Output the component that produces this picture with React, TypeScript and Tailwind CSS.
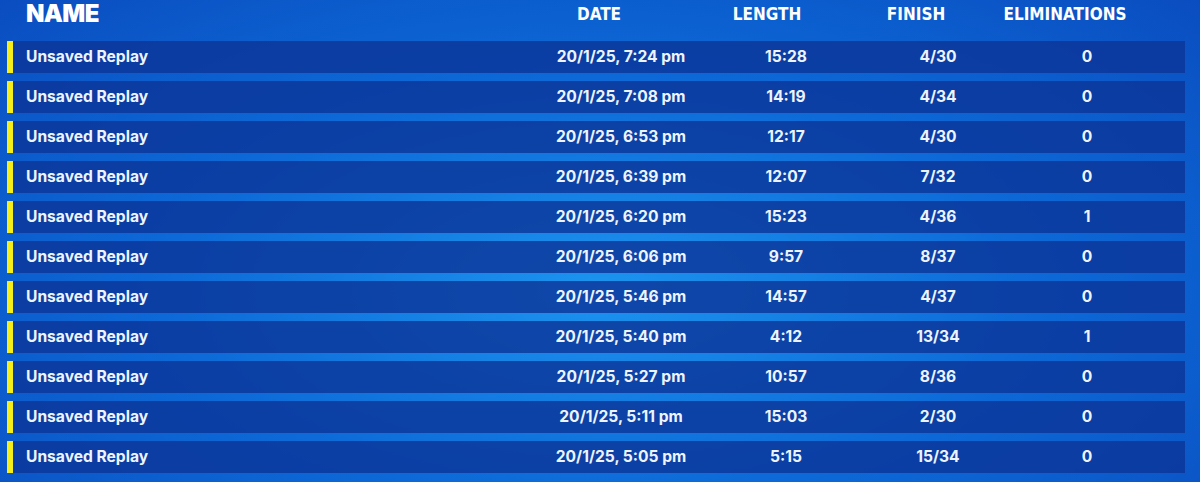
import React from 'react';

interface Replay {
  date: string;
  length: string;
  finish: string;
  elims: number;
}

const replays: Replay[] = [
  { date: '20/1/25, 7:24 pm', length: '15:28', finish: '4/30', elims: 0 },
  { date: '20/1/25, 7:08 pm', length: '14:19', finish: '4/34', elims: 0 },
  { date: '20/1/25, 6:53 pm', length: '12:17', finish: '4/30', elims: 0 },
  { date: '20/1/25, 6:39 pm', length: '12:07', finish: '7/32', elims: 0 },
  { date: '20/1/25, 6:20 pm', length: '15:23', finish: '4/36', elims: 1 },
  { date: '20/1/25, 6:06 pm', length: '9:57', finish: '8/37', elims: 0 },
  { date: '20/1/25, 5:46 pm', length: '14:57', finish: '4/37', elims: 0 },
  { date: '20/1/25, 5:40 pm', length: '4:12', finish: '13/34', elims: 1 },
  { date: '20/1/25, 5:27 pm', length: '10:57', finish: '8/36', elims: 0 },
  { date: '20/1/25, 5:11 pm', length: '15:03', finish: '2/30', elims: 0 },
  { date: '20/1/25, 5:05 pm', length: '5:15', finish: '15/34', elims: 0 },
];

function ReplayRow({ replay }: { replay: Replay }) {
  return (
    <div className="flex h-8">
      {/* selection marker */}
      <div className="w-[6px] bg-[#f3ee1c]" />
      <div className="flex flex-1 items-center bg-[#0b3597]/80 text-[15.6px] font-bold text-[#eef4ff]">
        <div className="w-[528px] pl-[13px]">Unsaved Replay</div>
        <div className="w-[160px] text-center">{replay.date}</div>
        <div className="w-[170px] text-center">{replay.length}</div>
        <div className="w-[134px] text-center">{replay.finish}</div>
        <div className="w-[164px] text-center">{replay.elims}</div>
      </div>
    </div>
  );
}

export default function App() {
  return (
    <div
      className="relative h-[482px] w-[1200px] overflow-hidden bg-[radial-gradient(ellipse_at_50%_60%,#1c94f0_0%,#0d6ad8_50%,#0a4dc0_100%)]"
      style={{ fontFamily: 'Inter, "Noto Sans", sans-serif' }}
    >
      {/* Column headers */}
      <div className="flex h-7 items-center pl-[26px] text-white">
        <div className="w-[493px] text-[24px] leading-none font-black tracking-tight">NAME</div>
        <div
          className="flex items-center text-[17px] leading-none font-bold"
          style={{ fontFamily: '"DejaVu Sans Condensed", "DejaVu Sans", sans-serif' }}
        >
          <div className="w-[160px] text-center">DATE</div>
          <div className="w-[176px] text-center">LENGTH</div>
          <div className="w-[122px] text-center">FINISH</div>
          <div className="w-[176px] text-center">ELIMINATIONS</div>
        </div>
      </div>

      {/* Replay list */}
      <div className="flex flex-col gap-2 pt-[13px] pr-[15px] pl-[7px]">
        {replays.map((r, i) => (
          <ReplayRow key={i} replay={r} />
        ))}
      </div>
    </div>
  );
}
